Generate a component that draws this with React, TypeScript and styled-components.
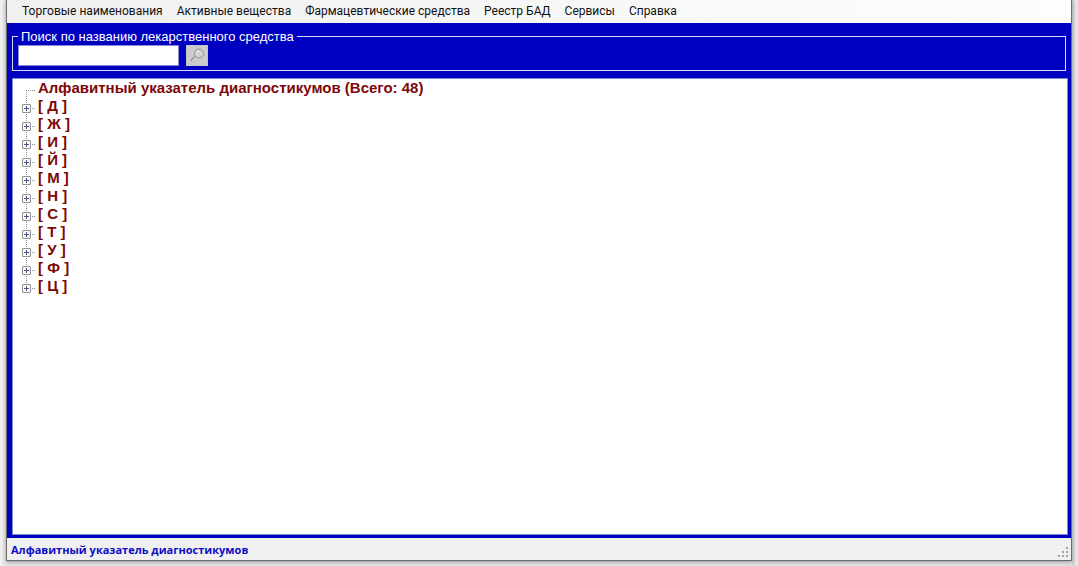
import React, { useState } from "react";
import styled, { createGlobalStyle } from "styled-components";

const GlobalStyle = createGlobalStyle`
  *, *::before, *::after { box-sizing: border-box; }
  body { margin: 0; background: #e6e6e6; }
`;

const Desktop = styled.div`
  height: 100vh;
  padding: 0 6px 5px;
  background: linear-gradient(to right, #f2f2f2, #e2e2e2 6px, #e2e2e2 calc(100% - 6px), #d2d2d2 calc(100% - 6px), #ececec);
`;

const AppWindow = styled.div`
  height: 100%;
  display: flex;
  flex-direction: column;
  border: 1px solid #6c6c70;
  border-top: 0;
  background: #0000c0;
  box-shadow: 0 1px 4px #00000055;
`;

const MenuBar = styled.nav`
  flex: none;
  display: flex;
  gap: 14px;
  height: 23px;
  padding: 0 0 2px 15px;
  background: linear-gradient(to right, #f0f0f0, #fdfdfd);
`;

const MenuItem = styled.button`
  border: 0;
  padding: 0;
  background: none;
  color: #111;
  font: 12px/20px Roboto, "Open Sans", sans-serif;
  white-space: nowrap;
`;

const Workspace = styled.main`
  flex: 1;
  min-height: 0;
  display: flex;
  flex-direction: column;
  gap: 7px;
  padding: 5px 3px 3px 5px;
`;

const SearchGroup = styled.fieldset`
  flex: none;
  margin: 0 2px 0 0;
  padding: 1px 5px 4px;
  border: 1px solid #d8d8f4;
  min-width: 0;
`;

const SearchLegend = styled.legend`
  padding: 2px 3px 0;
  color: #fff;
  font: 13px/14px "Liberation Sans", Arial, sans-serif;
`;

const SearchRow = styled.div`
  display: flex;
  align-items: center;
  gap: 7px;
`;

const SearchInput = styled.input`
  width: 161px;
  height: 21px;
  padding: 0 3px;
  border: 1px solid #8a8ad8;
  border-radius: 0;
  background: #fff;
  font: 13px "Liberation Sans", Arial, sans-serif;
`;

const SearchButton = styled.button`
  display: flex;
  align-items: center;
  justify-content: center;
  width: 22px;
  height: 21px;
  padding: 0;
  border: 1px solid #c4c4c4;
  background: #cccccc;
`;

const TreePanel = styled.section`
  flex: 1;
  min-height: 0;
  overflow: auto;
  padding: 2px 8px;
  border: 1px solid #7c8cd0;
  background: #fff;
`;

const TreeList = styled.ul`
  margin: 0;
  padding: 0;
  list-style: none;
`;

const TreeRow = styled.li`
  display: flex;
  height: 18px;
`;

const Expander = styled.button`
  width: 16px;
  height: 18px;
  padding: 0;
  border: 0;
  background: none;
`;

const Connector = styled.svg`
  display: block;
  flex: none;
`;

const TreeLabel = styled.span`
  padding-left: 1px;
  color: #7c0808;
  font: bold 15px/14px "Liberation Sans", Arial, sans-serif;
  white-space: nowrap;
`;

const StatusBar = styled.footer`
  flex: none;
  display: flex;
  align-items: center;
  justify-content: space-between;
  height: 22px;
  padding: 2px 2px 0 4px;
  background: #f0f0f0;
  color: #0c0cc4;
  font: bold 11px/20px "Open Sans", "Noto Sans", sans-serif;
`;

const GripIcon = styled.svg`
  align-self: flex-end;
  margin-bottom: 2px;
`;

const menuItems = [
  "Торговые наименования",
  "Активные вещества",
  "Фармацевтические средства",
  "Реестр БАД",
  "Сервисы",
  "Справка",
];
const letters = ["Д", "Ж", "И", "Й", "М", "Н", "С", "Т", "У", "Ф", "Ц"];

function RootLines() {
  return (
    <Connector width="16" height="18" aria-hidden="true" stroke="#8c8c8c" strokeDasharray="1 1">
      <path d="M5 9.5H15M5.5 11V18" fill="none" />
    </Connector>
  );
}

function NodeLines({ open, last }: { open: boolean; last: boolean }) {
  return (
    <Connector width="16" height="18" aria-hidden="true" fill="none">
      <path d={last ? "M5.5 1V5M11 9.5H15" : "M5.5 1V5M5.5 15V18M11 9.5H15"} stroke="#8c8c8c" strokeDasharray="1 1" />
      <rect x="1.5" y="5.5" width="8" height="8" rx="0.5" fill="#f8f8f8" stroke="#929292" />
      <path d={open ? "M3 9.5H8" : "M3 9.5H8M5.5 7V12"} stroke="#48548c" />
    </Connector>
  );
}

function Magnifier() {
  return (
    <svg width="18" height="17" viewBox="0 0 18 17" fill="none" aria-hidden="true">
      <path d="M8 9L3 14" stroke="#949494" strokeWidth="2" />
      <path d="M8 10L4 14" stroke="#dedede" />
      <ellipse cx="11" cy="6.500" rx="4.500" ry="4.500" fill="#d2d2d2" stroke="#929292" />
      <path d="M8.500 6.500Q9 4 11.500 4" stroke="#ececec" />
    </svg>
  );
}

function SizeGrip() {
  return (
    <GripIcon width="11" height="11" fill="#a4a4a4" aria-hidden="true">
      <path d="M8 0h2v2h-2zM4 4h2v2h-2zM8 4h2v2h-2zM0 8h2v2h-2zM4 8h2v2h-2zM8 8h2v2h-2z" />
    </GripIcon>
  );
}

export default function App() {
  const [opened, setOpened] = useState<string[]>([]);
  const toggle = (letter: string) =>
    setOpened((now) => (now.includes(letter) ? now.filter((l) => l !== letter) : [...now, letter]));

  return (
    <>
      <GlobalStyle />
      <Desktop>
        <AppWindow>
          <MenuBar>
            {menuItems.map((item) => (
              <MenuItem key={item} type="button">{item}</MenuItem>
            ))}
          </MenuBar>
          <Workspace>
            <SearchGroup>
              <SearchLegend id="search-title">Поиск по названию лекарственного средства</SearchLegend>
              <SearchRow>
                <SearchInput type="text" aria-labelledby="search-title" />
                <SearchButton type="button" aria-labelledby="search-title">
                  <Magnifier />
                </SearchButton>
              </SearchRow>
            </SearchGroup>
            <TreePanel>
              <TreeList>
                <TreeRow>
                  <RootLines />
                  <TreeLabel>Алфавитный указатель диагностикумов (Всего: 48)</TreeLabel>
                </TreeRow>
                {letters.map((letter, i) => (
                  <TreeRow key={letter}>
                    <Expander
                      type="button"
                      aria-expanded={opened.includes(letter)}
                      aria-labelledby={`node-${i}`}
                      onClick={() => toggle(letter)}
                    >
                      <NodeLines open={opened.includes(letter)} last={i === letters.length - 1} />
                    </Expander>
                    <TreeLabel id={`node-${i}`}>[ {letter} ]</TreeLabel>
                  </TreeRow>
                ))}
              </TreeList>
            </TreePanel>
          </Workspace>
          <StatusBar>
            <span>Алфавитный указатель диагностикумов</span>
            <SizeGrip />
          </StatusBar>
        </AppWindow>
      </Desktop>
    </>
  );
}
